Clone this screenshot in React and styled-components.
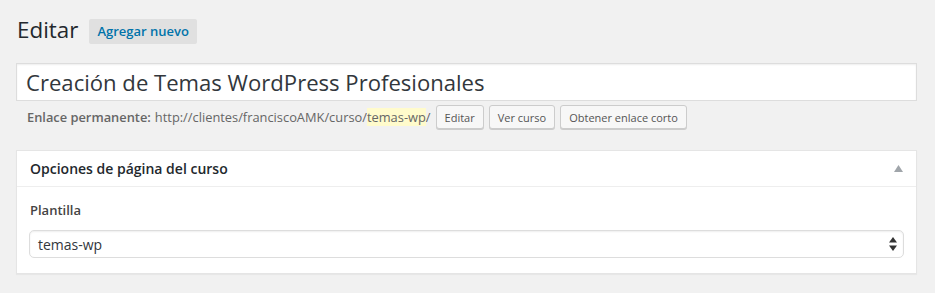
import React from "react";
import styled, { createGlobalStyle } from "styled-components";

const Global = createGlobalStyle`
  html, body { margin: 0; padding: 0; background: #f1f1f1; }
  body { font-family: "Open Sans", "Noto Sans", sans-serif; color: #444; font-size: 13px; }
  * { box-sizing: border-box; }
`;

const Wrap = styled.div`
  padding: 15px 18px 20px 16px;
`;

const HeadRow = styled.div`
  display: flex;
  align-items: center;
  height: 29px;
  padding-left: 1px;
`;

const Title = styled.h1`
  margin: 0;
  font-size: 22.4px;
  font-weight: 400;
  line-height: 29px;
  color: #23282d;
`;

const AddNew = styled.a`
  margin-left: 11px;
  margin-top: 3px;
  height: 25px;
  display: inline-flex;
  align-items: center;
  padding: 0 8px;
  background: #e0e0e0;
  border-radius: 2px;
  color: #0073aa;
  font-size: 13px;
  font-weight: 600;
  text-decoration: none;
`;

const TitleInput = styled.div`
  margin-top: 19px;
  height: 38px;
  background: #fff;
  border: 1px solid #ddd;
  box-shadow: inset 0 1px 2px rgba(0, 0, 0, 0.07);
  display: flex;
  align-items: center;
  padding: 0 9px;
  font-size: 22.1px;
  color: #32373c;
`;

const SlugRow = styled.div`
  margin-top: 4px;
  height: 24px;
  display: flex;
  align-items: center;
  padding-left: 11px;
  font-size: 12.85px;
  color: #666;
`;

const SlugLabel = styled.strong`
  font-weight: 600;
  margin-right: 4px;
`;

const Highlight = styled.span`
  background: #fffbcc;
`;

const SmallButton = styled.span`
  margin-left: ${(p) => p.$ml || 5}px;
  height: 24px;
  display: inline-flex;
  align-items: center;
  padding: 0 8px;
  border: 1px solid #ccc;
  border-radius: 3px;
  background: #f7f7f7;
  box-shadow: 0 1px 0 #ccc;
  font-size: 11px;
  color: #555;
  white-space: nowrap;
`;

const Box = styled.div`
  margin-top: 21px;
  background: #fff;
  border: 1px solid #e5e5e5;
  box-shadow: 0 1px 1px rgba(0, 0, 0, 0.04);
`;

const BoxHeader = styled.div`
  height: 36px;
  border-bottom: 1px solid #eee;
  display: flex;
  align-items: center;
  justify-content: space-between;
  padding: 0 13px 0 13px;
`;

const BoxTitle = styled.h2`
  margin: 0;
  font-size: 14px;
  font-weight: 600;
  color: #23282d;
`;

const BoxBody = styled.div`
  padding: 14px 12px 15px 12px;
`;

const Label = styled.div`
  font-size: 13px;
  font-weight: 600;
  color: #444;
  line-height: 18px;
  padding-left: 1px;
`;

const Select = styled.div`
  margin-top: 11px;
  height: 28px;
  border: 1px solid #ddd;
  border-radius: 5px;
  background: #fff;
  box-shadow: inset 0 1px 2px rgba(0, 0, 0, 0.07);
  display: flex;
  align-items: center;
  justify-content: space-between;
  padding: 0 6px 0 8px;
  font-size: 14px;
  color: #32373c;
`;

export default function App() {
  return (
    <>
      <Global />
      <Wrap>
        <HeadRow>
          <Title>Editar</Title>
          <AddNew href="#">Agregar nuevo</AddNew>
        </HeadRow>
        <TitleInput>Creación de Temas WordPress Profesionales</TitleInput>
        <SlugRow>
          <SlugLabel>Enlace permanente:</SlugLabel>
          <span>
            http://clientes/franciscoAMK/curso/<Highlight>temas-wp</Highlight>/
          </span>
          <SmallButton $ml={5}>Editar</SmallButton>
          <SmallButton>Ver curso</SmallButton>
          <SmallButton>Obtener enlace corto</SmallButton>
        </SlugRow>
        <Box>
          <BoxHeader>
            <BoxTitle>Opciones de página del curso</BoxTitle>
            <svg width="9" height="7" viewBox="0 0 9 7">
              <polygon points="4.5,0 9,7 0,7" fill="#a0a5aa" />
            </svg>
          </BoxHeader>
          <BoxBody>
            <Label>Plantilla</Label>
            <Select>
              <span>temas-wp</span>
              <svg width="8" height="14" viewBox="0 0 8 14">
                <polygon points="4,0 8,5.5 0,5.5" fill="#333" />
                <polygon points="0,8.5 8,8.5 4,14" fill="#333" />
              </svg>
            </Select>
          </BoxBody>
        </Box>
      </Wrap>
    </>
  );
}
